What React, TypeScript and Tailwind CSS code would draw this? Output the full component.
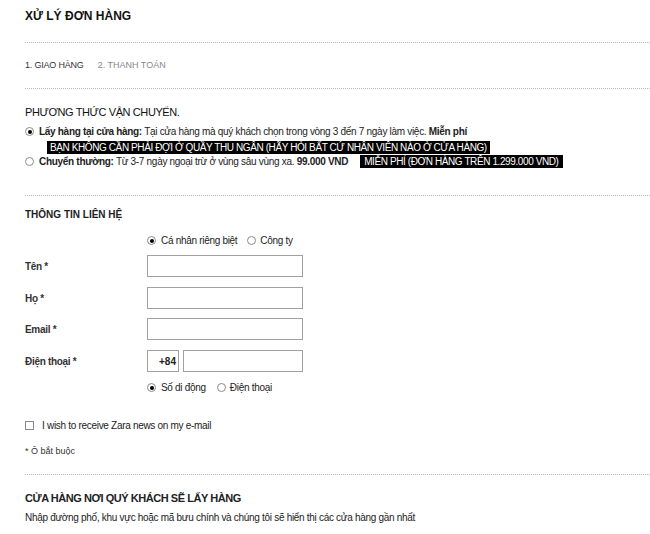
import React from "react";

function Radio({ checked }: { checked?: boolean }) {
  return (
    <span className="inline-flex h-[9px] w-[9px] shrink-0 items-center justify-center rounded-full border border-[#8a8a8a] bg-white">
      {checked && <span className="h-[4px] w-[4px] rounded-full bg-black" />}
    </span>
  );
}

function Dots({ className = "" }: { className?: string }) {
  return <div className={`h-0 border-t border-dotted border-[#b5b5b5] ${className}`} />;
}

function Field({ label, children, className = "" }: { label: string; children?: React.ReactNode; className?: string }) {
  return (
    <div className={`flex items-center ${className}`}>
      <div className="w-[122px] text-[10px] font-bold tracking-[-0.3px] text-[#333]">{label}</div>
      {children ?? <div className="h-[22px] w-[156px] border border-[#a0a0a0] bg-white" />}
    </div>
  );
}

export default function App() {
  return (
    <div
      className="h-[534px] w-[650px] overflow-hidden bg-white pl-[25px] text-[#222]"
      style={{ fontFamily: '"Liberation Sans", Arial, sans-serif' }}
    >
      <div className="pt-[9px] text-[12px] font-bold leading-[15px] text-[#111]">XỬ LÝ ĐƠN HÀNG</div>
      <Dots className="mt-[18px]" />
      <div className="mt-[17px] flex gap-[14px] text-[9px] leading-[10px]">
        <span className="tracking-[-0.2px] text-[#333]">1. GIAO HÀNG</span>
        <span className="text-[#888]">2. THANH TOÁN</span>
      </div>
      <Dots className="mt-[18px]" />

      <div className="mt-[16px] text-[11px] leading-[14px] tracking-[-0.4px] text-[#111]">PHƯƠNG THỨC VẬN CHUYỂN.</div>
      <div className="mt-[6px] flex items-center gap-[5px] text-[10px] leading-[13px] tracking-[-0.3px]">
        <Radio checked />
        <span className="whitespace-nowrap">
          <b>Lấy hàng tại cửa hàng:</b> Tại cửa hàng mà quý khách chọn trong vòng 3 đến 7 ngày làm việc. <b>Miễn phí</b>
        </span>
      </div>
      <div className="mt-[3px] flex pl-[22px]">
        <span className="whitespace-nowrap bg-black px-[3px] text-[10px] leading-[13px] tracking-[-0.4px] text-white">
          BẠN KHÔNG CẦN PHẢI ĐỢI Ở QUẦY THU NGÂN (HÃY HỎI BẤT CỨ NHÂN VIÊN NÀO Ở CỬA HÀNG)
        </span>
      </div>
      <div className="mt-[1px] flex items-center gap-[5px] text-[10px] leading-[13px] tracking-[-0.3px]">
        <Radio />
        <span className="whitespace-nowrap">
          <b>Chuyển thường:</b> Từ 3-7 ngày ngoại trừ ở vùng sâu vùng xa. <b>99.000 VND</b>
        </span>
        <span className="ml-[7px] whitespace-nowrap bg-black px-[4px] tracking-[-0.4px] text-white">
          MIỄN PHÍ (ĐƠN HÀNG TRÊN 1.299.000 VND)
        </span>
      </div>
      <Dots className="mt-[27px]" />

      <div className="mt-[12px] text-[10px] font-bold leading-[13px] text-[#222]">THÔNG TIN LIÊN HỆ</div>
      <div className="mt-[13px] flex items-center pl-[122px] text-[10px] leading-[13px] tracking-[-0.3px]">
        <Radio checked />
        <span className="ml-[5px]">Cá nhân riêng biệt</span>
        <span className="ml-[10px] flex"><Radio /></span>
        <span className="ml-[4px]">Công ty</span>
      </div>
      <Field label="Tên *" className="mt-[8px]" />
      <Field label="Họ *" className="mt-[10px]" />
      <Field label="Email *" className="mt-[9px]" />
      <Field label="Điện thoại *" className="mt-[10px]">
        <div className="flex gap-[4px]">
          <div className="flex h-[22px] w-[32px] items-center justify-end border border-[#a0a0a0] pr-[2px] text-[10px] font-bold">+84</div>
          <div className="h-[22px] w-[120px] border border-[#a0a0a0]" />
        </div>
      </Field>
      <div className="mt-[9px] flex items-center pl-[122px] text-[10px] leading-[13px] tracking-[-0.3px]">
        <Radio checked />
        <span className="ml-[5px]">Số di động</span>
        <span className="ml-[11px] flex"><Radio /></span>
        <span className="ml-[4px]">Điện thoại</span>
      </div>

      <div className="mt-[25px] flex items-center text-[10px] leading-[13px] tracking-[-0.3px]">
        <span className="h-[9px] w-[9px] border border-[#8a8a8a]" />
        <span className="ml-[8px]">I wish to receive Zara news on my e-mail</span>
      </div>
      <div className="mt-[14px] text-[9px] leading-[10px] text-[#333]">* Ô bắt buộc</div>
      <Dots className="mt-[18px]" />
      <div className="mt-[16px] text-[11px] font-bold leading-[14px] tracking-[-0.45px] text-[#222]">
        CỬA HÀNG NƠI QUÝ KHÁCH SẼ LẤY HÀNG
      </div>
      <div className="mt-[7px] whitespace-nowrap text-[10px] leading-[12px] tracking-[-0.3px] text-[#222]">
        Nhập đường phố, khu vực hoặc mã bưu chính và chúng tôi sẽ hiển thị các cửa hàng gần nhất
      </div>
    </div>
  );
}
